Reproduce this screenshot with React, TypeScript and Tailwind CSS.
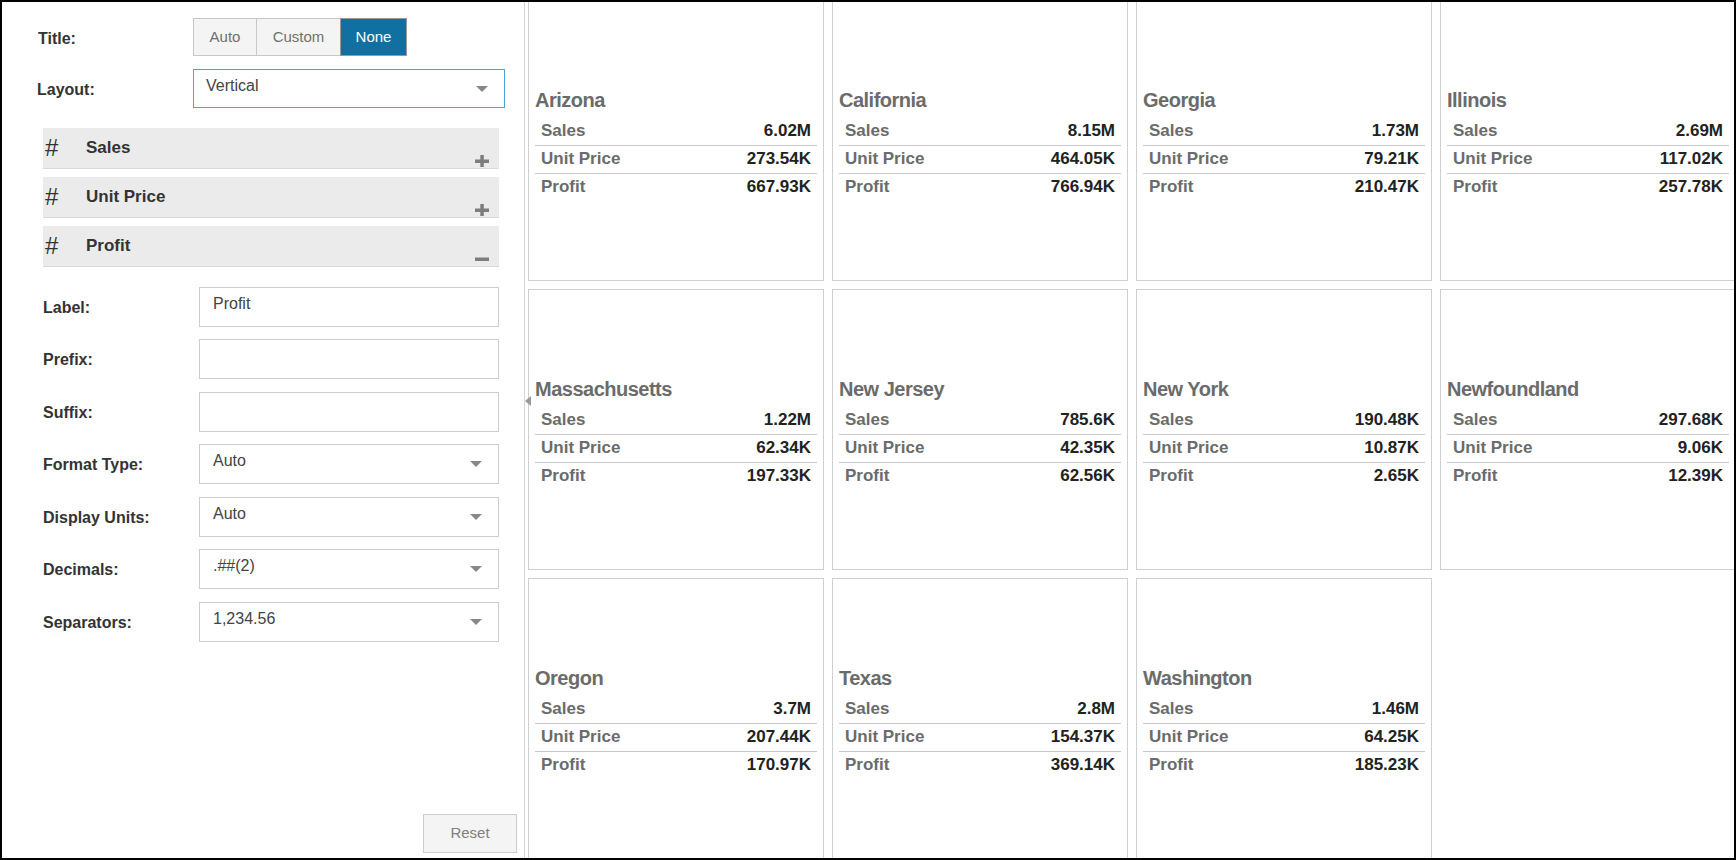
import React from 'react'

type CardProps = {
    name: string
    sales: string
    unitPrice: string
    profit: string
}

function StateCard({ name, sales, unitPrice, profit }: CardProps) {
    const rows = [
        { label: 'Sales', value: sales },
        { label: 'Unit Price', value: unitPrice },
        { label: 'Profit', value: profit },
    ]
    return (
        <div className="border border-[#cfcfcf] bg-white flex flex-col justify-center pt-[5px] px-[6px]">
            <div className="h-[28px] leading-[28px] text-[20px] tracking-[-0.5px] font-bold text-[#6b6b6b]">
                {name}
            </div>
            <div className="mt-[4px]">
                {rows.map((row, i) => (
                    <div
                        key={row.label}
                        className={
                            i < rows.length - 1
                                ? 'h-[28px] border-b border-[#c9c9c9] flex items-center justify-between px-[6px] text-[17px] font-bold'
                                : 'h-[27px] flex items-center justify-between px-[6px] text-[17px] font-bold'
                        }
                    >
                        <span className="text-[#6b6b6b]">{row.label}</span>
                        <span className="text-[#222]">{row.value}</span>
                    </div>
                ))}
            </div>
        </div>
    )
}

function Arrow() {
    return (
        <svg width="12" height="7" viewBox="0 0 12 7" className="absolute right-[16px] top-[16px]">
            <polygon points="0,0 12,0 6,6" fill="#888" />
        </svg>
    )
}

function Plus() {
    return (
        <svg width="14" height="12" viewBox="0 0 14 12" className="absolute right-[10px] bottom-[1px]">
            <rect x="0" y="4.5" width="14" height="3.5" fill="#7d7d7d" />
            <rect x="5.3" y="0" width="3.5" height="12" fill="#7d7d7d" />
        </svg>
    )
}

function Minus() {
    return (
        <svg width="14" height="12" viewBox="0 0 14 12" className="absolute right-[10px] bottom-[1px]">
            <rect x="0" y="4.5" width="14" height="3.5" fill="#7d7d7d" />
        </svg>
    )
}

type FieldProps = {
    label: string
    value: string
    select?: boolean
    spacing: string
}

function Field({ label, value, select, spacing }: FieldProps) {
    return (
        <div className={`flex items-center pl-[41px] ${spacing}`}>
            <div className="w-[156px] pt-[2px] text-[16px] font-bold text-[#333]">{label}</div>
            <div className="relative w-[300px] h-[40px] border border-[#cccccc] bg-white px-[13px] pt-[6px] text-[16px] leading-[20px] text-[#444]">
                {value}
                {select && <Arrow />}
            </div>
        </div>
    )
}

export default function App() {
    const cards: CardProps[] = [
        { name: 'Arizona', sales: '6.02M', unitPrice: '273.54K', profit: '667.93K' },
        { name: 'California', sales: '8.15M', unitPrice: '464.05K', profit: '766.94K' },
        { name: 'Georgia', sales: '1.73M', unitPrice: '79.21K', profit: '210.47K' },
        { name: 'Illinois', sales: '2.69M', unitPrice: '117.02K', profit: '257.78K' },
        { name: 'Massachusetts', sales: '1.22M', unitPrice: '62.34K', profit: '197.33K' },
        { name: 'New Jersey', sales: '785.6K', unitPrice: '42.35K', profit: '62.56K' },
        { name: 'New York', sales: '190.48K', unitPrice: '10.87K', profit: '2.65K' },
        { name: 'Newfoundland', sales: '297.68K', unitPrice: '9.06K', profit: '12.39K' },
        { name: 'Oregon', sales: '3.7M', unitPrice: '207.44K', profit: '170.97K' },
        { name: 'Texas', sales: '2.8M', unitPrice: '154.37K', profit: '369.14K' },
        { name: 'Washington', sales: '1.46M', unitPrice: '64.25K', profit: '185.23K' },
    ]

    const measures = [
        { name: 'Sales', open: false },
        { name: 'Unit Price', open: false },
        { name: 'Profit', open: true },
    ]

    const fields: FieldProps[] = [
        { label: 'Label:', value: 'Profit', spacing: 'mt-[20px]' },
        { label: 'Prefix:', value: '', spacing: 'mt-[12px]' },
        { label: 'Suffix:', value: '', spacing: 'mt-[13px]' },
        { label: 'Format Type:', value: 'Auto', select: true, spacing: 'mt-[12px]' },
        { label: 'Display Units:', value: 'Auto', select: true, spacing: 'mt-[13px]' },
        { label: 'Decimals:', value: '.##(2)', select: true, spacing: 'mt-[12px]' },
        { label: 'Separators:', value: '1,234.56', select: true, spacing: 'mt-[13px]' },
    ]

    return (
        <div className="w-[1736px] h-[860px] border-2 border-black bg-white flex overflow-hidden font-['Liberation_Sans',Arial,sans-serif]">
            {/* settings panel */}
            <div className="relative w-[523px] shrink-0 border-r border-[#d6d6d6] flex flex-col">
                <div className="flex items-center pl-[36px] mt-[16px] h-[38px]">
                    <div className="w-[155px] pt-[3px] text-[16px] font-bold text-[#333]">Title:</div>
                    <div className="flex h-[38px] text-[15px]">
                        <button className="w-[64px] border border-[#c8c8c8] bg-[#f4f4f4] text-[#707070]">
                            Auto
                        </button>
                        <button className="w-[84px] border-y border-r border-[#c8c8c8] bg-[#f4f4f4] text-[#707070]">
                            Custom
                        </button>
                        <button className="w-[67px] border border-[#999] bg-[#1170a2] text-white -ml-[1px]">
                            None
                        </button>
                    </div>
                </div>

                <div className="flex items-center pl-[35px] mt-[13px]">
                    <div className="w-[156px] pt-[2px] text-[16px] font-bold text-[#333]">Layout:</div>
                    <div className="relative w-[312px] h-[39px] border border-[#45a6dc] px-[12px] pt-[6px] text-[16px] leading-[20px] text-[#444]">
                        Vertical
                        <Arrow />
                    </div>
                </div>

                <div className="ml-[41px] w-[456px] mt-[20px] flex flex-col gap-[8px]">
                    {measures.map((m) => (
                        <div
                            key={m.name}
                            className="relative h-[41px] bg-[#ebebeb] border-b border-[#d9d9d9] flex items-center pl-[2px]"
                        >
                            <span className="w-[41px] text-[24px] leading-none text-[#333]">#</span>
                            <span className="text-[17px] font-bold text-[#333]">{m.name}</span>
                            {m.open ? <Minus /> : <Plus />}
                        </div>
                    ))}
                </div>

                {fields.map((f) => (
                    <Field key={f.label} {...f} />
                ))}

                <div className="mt-auto flex justify-end pr-[7px] pb-[5px]">
                    <button className="w-[94px] h-[39px] border border-[#cccccc] bg-[#f4f4f4] text-[15px] text-[#808080]">
                        Reset
                    </button>
                </div>

                <svg width="6" height="10" viewBox="0 0 6 10" className="absolute right-[-7px] top-[394px]">
                    <polygon points="6,0 6,10 0,5" fill="#9a9a9a" />
                </svg>
            </div>

            {/* cards */}
            <div className="flex-1 overflow-hidden pl-[3px]">
                <div className="-mt-[2px] grid grid-cols-[repeat(4,296px)] auto-rows-[281px] gap-[8px]">
                    {cards.map((c) => (
                        <StateCard key={c.name} {...c} />
                    ))}
                </div>
            </div>
        </div>
    )
}
